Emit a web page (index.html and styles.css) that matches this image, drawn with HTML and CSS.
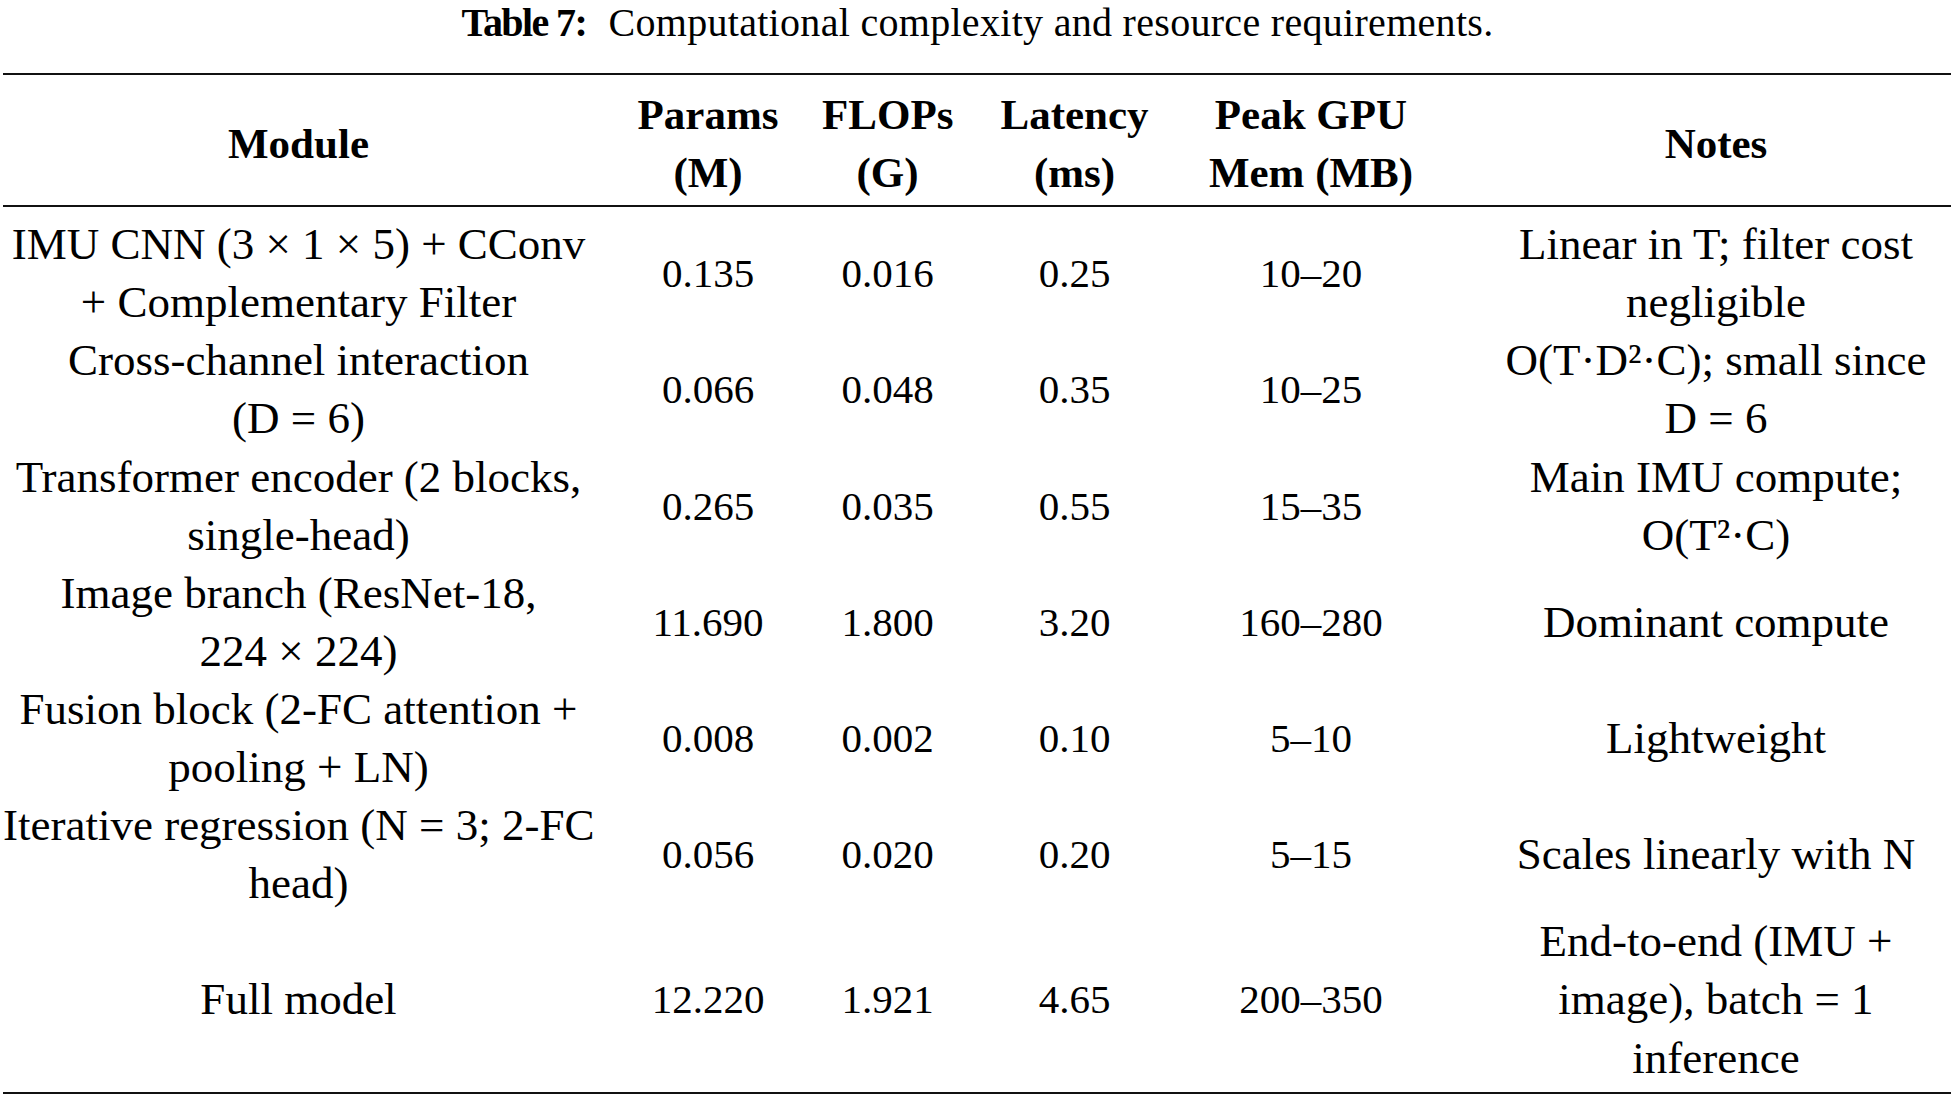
FILE: index.html
```html
<!DOCTYPE html>
<html lang="en">
<head>
<meta charset="utf-8">
<title>Table 7</title>
<link rel="stylesheet" href="styles.css">
</head>
<body>
<p class="title"><b class="label">Table 7:</b> Computational complexity and resource requirements.</p>
<table class="complexity">
  <colgroup>
    <col class="c-module">
    <col class="c-params">
    <col class="c-flops">
    <col class="c-lat">
    <col class="c-mem">
    <col class="c-notes">
  </colgroup>
  <thead>
    <tr>
      <th>Module</th>
      <th>Params<br>(M)</th>
      <th>FLOPs<br>(G)</th>
      <th>Latency<br>(ms)</th>
      <th>Peak GPU<br>Mem (MB)</th>
      <th class="notes">Notes</th>
    </tr>
  </thead>
  <tbody>
    <tr>
      <td>IMU CNN (3 × 1 × 5) + CConv<br>+ Complementary Filter</td>
      <td class="num">0.135</td>
      <td class="num">0.016</td>
      <td class="num">0.25</td>
      <td class="num">10–20</td>
      <td class="notes">Linear in T; filter cost<br>negligible</td>
    </tr>
    <tr>
      <td>Cross-channel interaction<br>(D = 6)</td>
      <td class="num">0.066</td>
      <td class="num">0.048</td>
      <td class="num">0.35</td>
      <td class="num">10–25</td>
      <td class="notes">O(T·D²·C); small since<br>D = 6</td>
    </tr>
    <tr>
      <td>Transformer encoder (2 blocks,<br>single-head)</td>
      <td class="num">0.265</td>
      <td class="num">0.035</td>
      <td class="num">0.55</td>
      <td class="num">15–35</td>
      <td class="notes">Main IMU compute;<br>O(T²·C)</td>
    </tr>
    <tr>
      <td>Image branch (ResNet-18,<br>224 × 224)</td>
      <td class="num">11.690</td>
      <td class="num">1.800</td>
      <td class="num">3.20</td>
      <td class="num">160–280</td>
      <td class="notes">Dominant compute</td>
    </tr>
    <tr>
      <td>Fusion block (2-FC attention +<br>pooling + LN)</td>
      <td class="num">0.008</td>
      <td class="num">0.002</td>
      <td class="num">0.10</td>
      <td class="num">5–10</td>
      <td class="notes">Lightweight</td>
    </tr>
    <tr>
      <td>Iterative regression (N = 3; 2-FC<br>head)</td>
      <td class="num">0.056</td>
      <td class="num">0.020</td>
      <td class="num">0.20</td>
      <td class="num">5–15</td>
      <td class="notes">Scales linearly with N</td>
    </tr>
    <tr>
      <td>Full model</td>
      <td class="num">12.220</td>
      <td class="num">1.921</td>
      <td class="num">4.65</td>
      <td class="num">200–350</td>
      <td class="notes">End-to-end (IMU +<br>image), batch = 1<br>inference</td>
    </tr>
  </tbody>
</table>
</body>
</html>
```
FILE: styles.css
```css
html, body {
  margin: 0;
  padding: 0;
  background: #fff;
}

body {
  color: #000;
  font-family: "Liberation Serif", "Times New Roman", serif;
}

.title {
  margin: 0 0 28px;
  font-size: 40px;
  line-height: 45px;
  letter-spacing: 0.3px;
  text-align: center;
}

.label {
  font-weight: 700;
  letter-spacing: -1.6px;
  margin-right: 12px;
}

.complexity {
  margin-left: 3px;
  width: 1948px;
  table-layout: fixed;
  border-collapse: separate;
  border-spacing: 0;
}

.c-module { width: 591px; }
.c-params { width: 228px; }
.c-flops  { width: 131px; }
.c-lat    { width: 243px; }
.c-mem    { width: 230px; }

.complexity th,
.complexity td {
  padding: 0;
  text-align: center;
  vertical-align: middle;
  white-space: nowrap;
  line-height: 58.1px;
}

.complexity th {
  font-size: 43px;
  font-weight: 700;
  border-top: 2px solid #111;
  border-bottom: 2px solid #111;
  padding-top: 11px;
  padding-bottom: 3px;
}

.complexity td {
  font-size: 45px;
  font-weight: 400;
}

.complexity td.num {
  font-size: 41px;
}

.complexity tbody tr:first-child td {
  padding-top: 8px;
}

.complexity tbody tr:last-child td {
  padding-bottom: 5px;
  border-bottom: 2px solid #111;
}

.complexity .notes {
  padding-left: 55px;
}
```
